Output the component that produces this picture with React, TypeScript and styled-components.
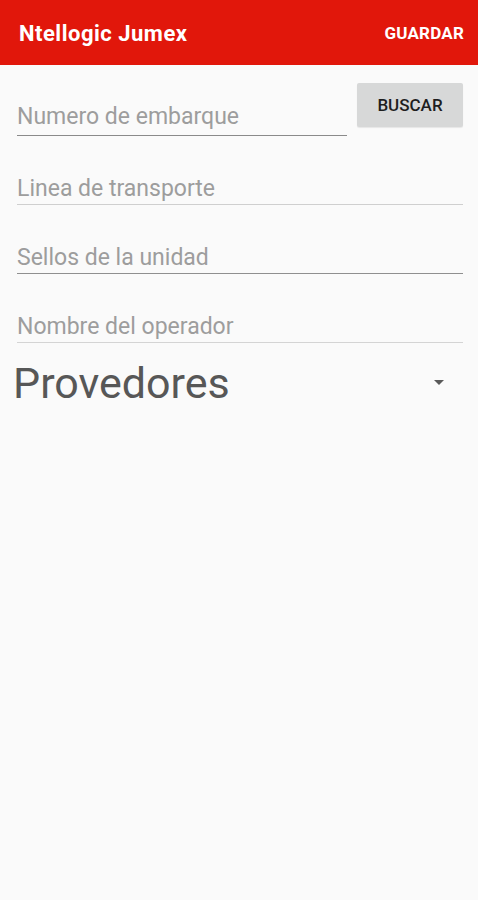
import React from "react";
import styled, { createGlobalStyle } from "styled-components";

const Global = createGlobalStyle`
  html, body { margin: 0; padding: 0; background: #fafafa; }
  body { font-family: Roboto, "Noto Sans", sans-serif; }
  * { box-sizing: border-box; }
`;

const Page = styled.div`
  width: 478px;
  min-height: 900px;
  background: #fafafa;
  display: flex;
  flex-direction: column;
`;

const AppBar = styled.header`
  height: 65px;
  background: #e1170b;
  display: flex;
  align-items: center;
  justify-content: space-between;
  padding: 1px 14px 0 19px;
  color: #fff;
`;

const Title = styled.h1`
  margin: 0;
  font-size: 22px;
  font-weight: 700;
  letter-spacing: 0.5px;
`;

const Action = styled.span`
  font-size: 17px;
  font-weight: 700;
  letter-spacing: 0.2px;
`;

const Form = styled.div`
  display: flex;
  flex-direction: column;
  padding: 18px 15px 0 17px;
`;

const TopRow = styled.div`
  display: flex;
  align-items: flex-start;
  gap: 10px;
`;

const Field = styled.div<{ $line: string; $mt: number }>`
  flex: 1;
  margin-top: ${(p) => p.$mt}px;
  height: 36px;
  display: flex;
  align-items: center;
  border-bottom: 1.5px solid ${(p) => p.$line};
  font-size: 23px;
  color: #9d9d9d;
  padding-bottom: 2px;
`;

const Button = styled.button`
  width: 106px;
  height: 44px;
  border: none;
  border-radius: 2px;
  background: #d7d8d8;
  color: #1e1e1e;
  font-family: Roboto, sans-serif;
  font-size: 17px;
  font-weight: 500;
  box-shadow: 0 1px 1px rgba(0, 0, 0, 0.08);
  padding: 0;
`;

const Spinner = styled.div`
  display: flex;
  align-items: center;
  justify-content: space-between;
  margin: 12px 19px 0 -4px;
  height: 56px;
`;

const SpinnerText = styled.span`
  font-size: 43px;
  color: #575757;
`;

const Caret = styled.span`
  width: 0;
  height: 0;
  margin-top: -2px;
  border-left: 5.5px solid transparent;
  border-right: 5.5px solid transparent;
  border-top: 5.5px solid #5a5a5a;
`;

export default function App() {
  return (
    <Page>
      <Global />
      <AppBar>
        <Title>Ntellogic Jumex</Title>
        <Action>GUARDAR</Action>
      </AppBar>
      <Form>
        <TopRow>
          <Field $line="#8a8a8a" $mt={17}>Numero de embarque</Field>
          <Button>BUSCAR</Button>
        </TopRow>
        <Field $line="#cfcfcf" $mt={39}>Linea de transporte</Field>
        <Field $line="#8f8f8f" $mt={39}>Sellos de la unidad</Field>
        <Field $line="#d4d4d4" $mt={39}>Nombre del operador</Field>
        <Spinner>
          <SpinnerText>Provedores</SpinnerText>
          <Caret />
        </Spinner>
      </Form>
    </Page>
  );
}
